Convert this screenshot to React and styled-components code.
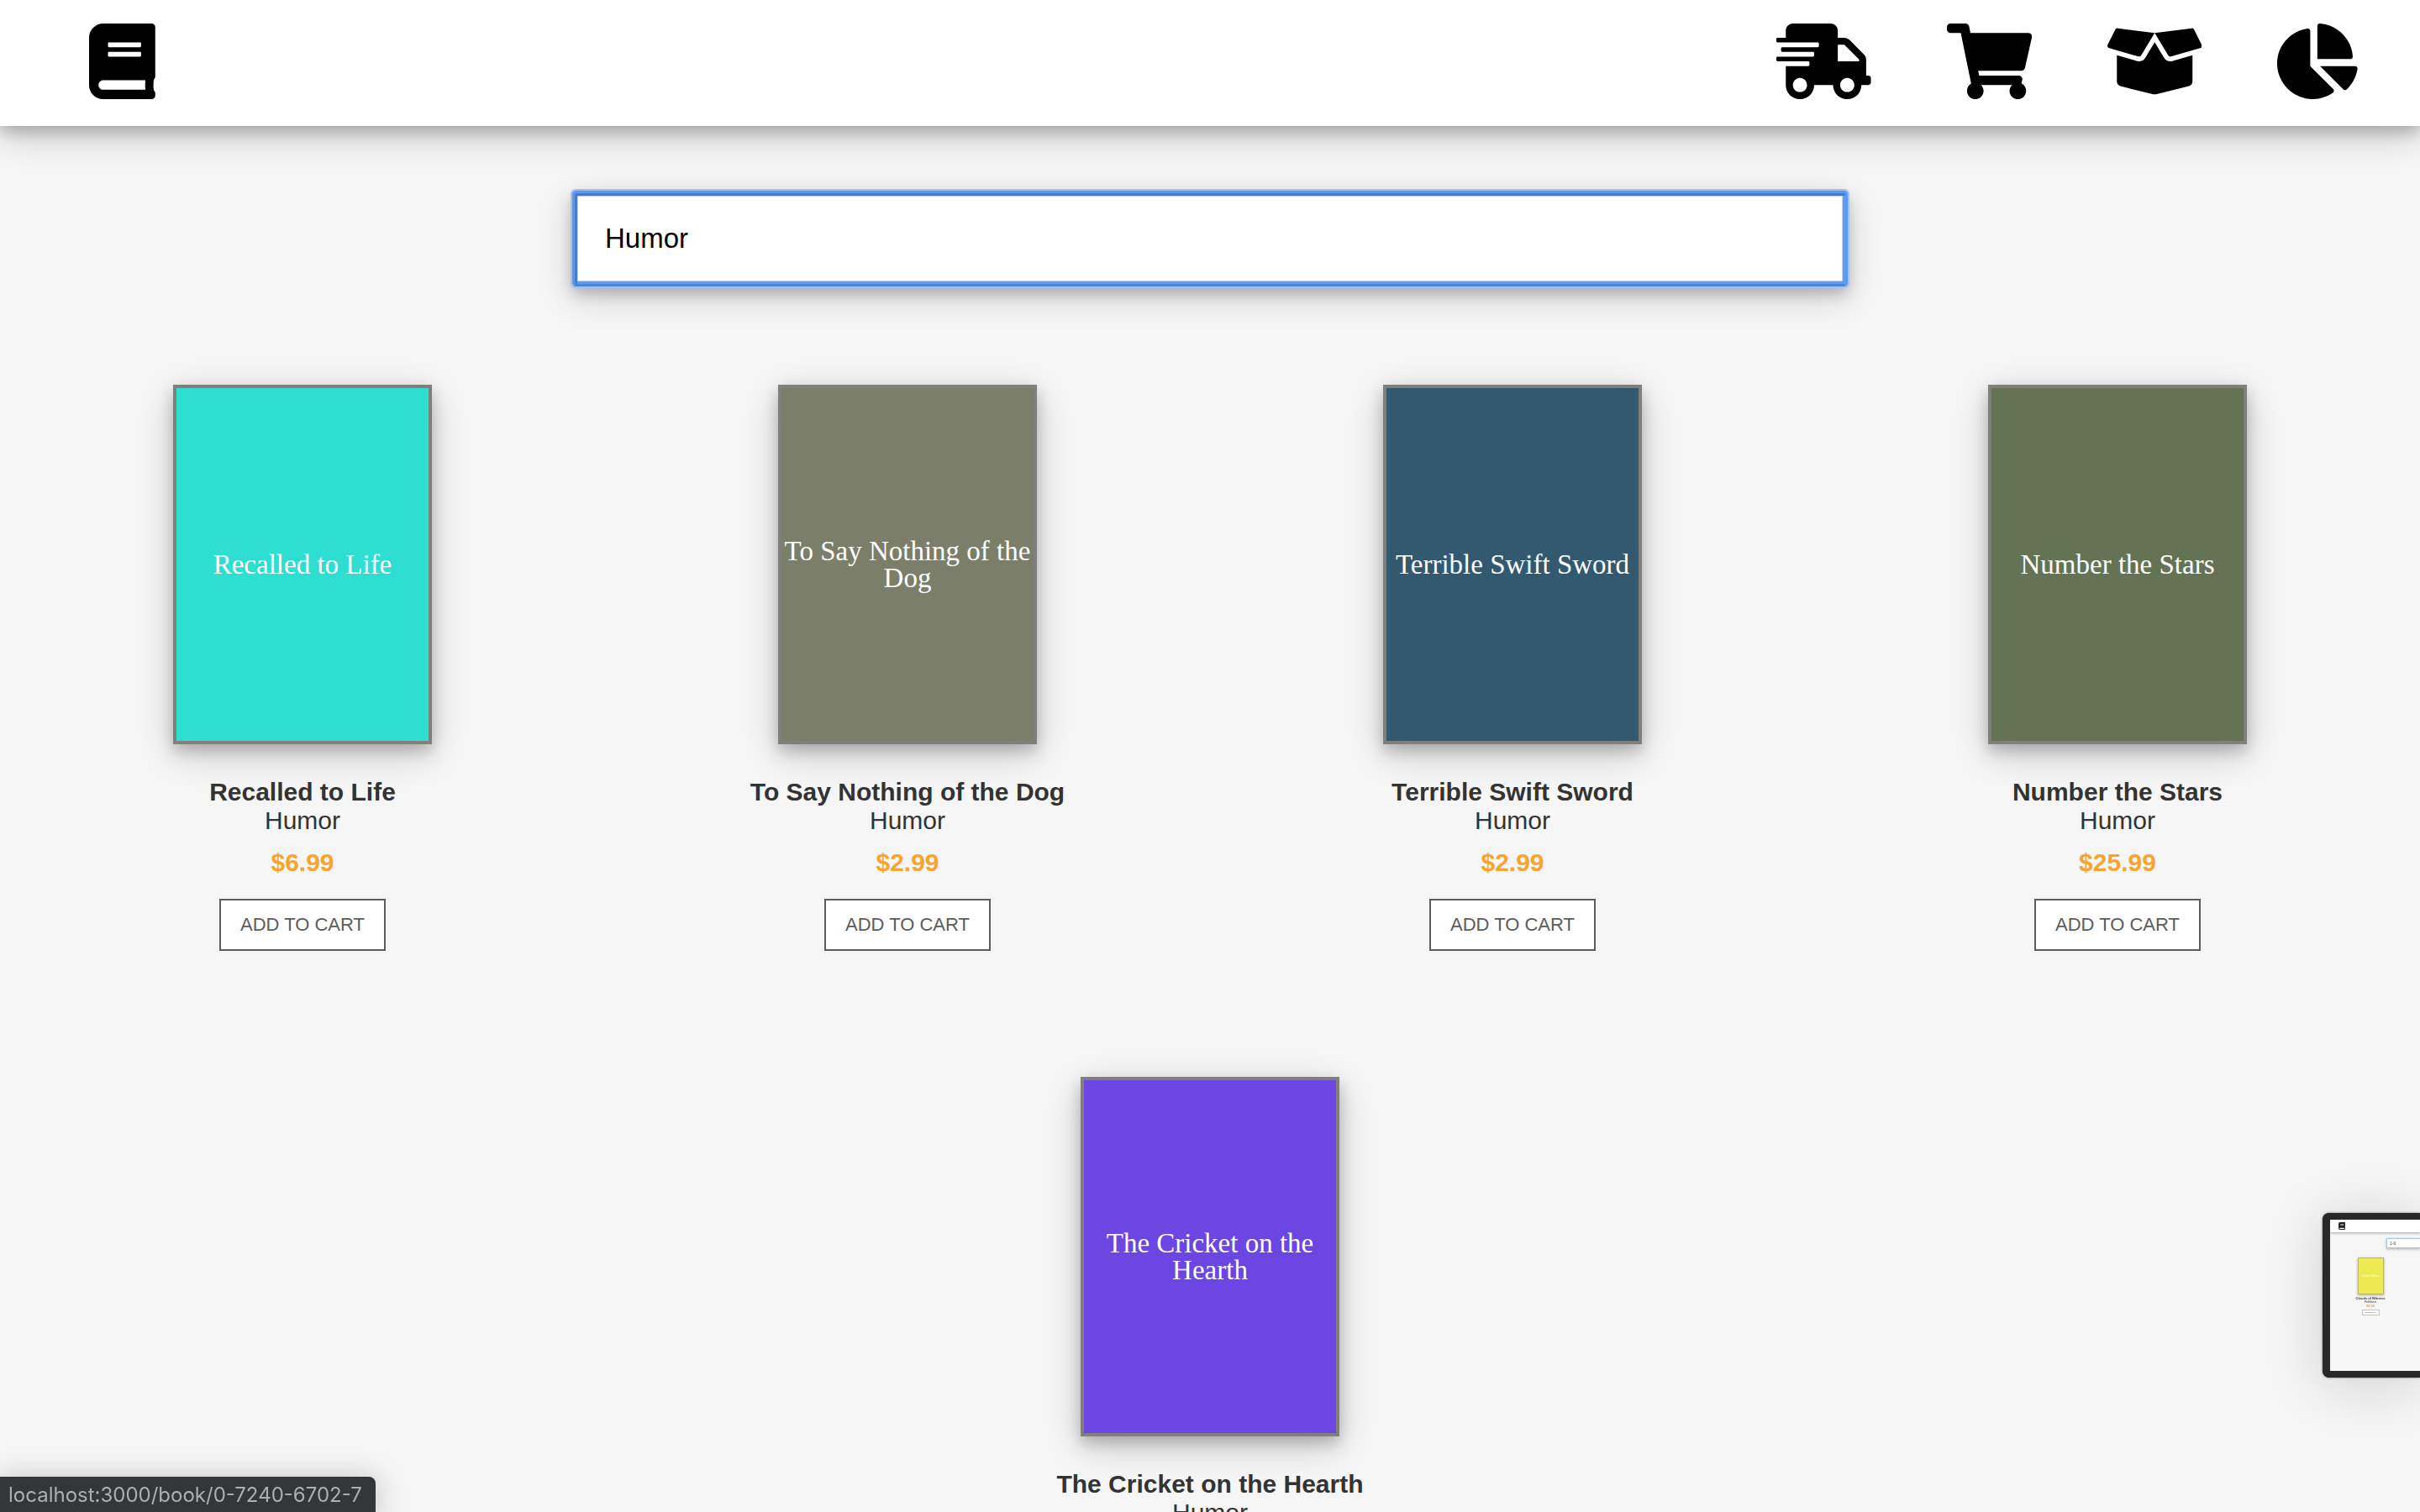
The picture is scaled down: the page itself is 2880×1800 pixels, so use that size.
import React, { useState } from "react";
import styled, { createGlobalStyle } from "styled-components";
import { FaBook, FaShippingFast, FaShoppingCart, FaBoxOpen, FaChartPie } from "react-icons/fa";

const GlobalStyle = createGlobalStyle`
  *, *::before, *::after { box-sizing: border-box; }
  html, body { height: 100%; overflow: hidden; }
  body {
    margin: 0;
    background: #f6f6f6;
    color: #333;
    font-family: Arial, "Liberation Sans", sans-serif;
    font-size: 30px;
  }
`;

const raised = "0 8px 16px rgba(0, 0, 0, 0.2), 0 12px 40px rgba(0, 0, 0, 0.19)";

const Header = styled.header`
  display: flex;
  justify-content: space-between;
  align-items: flex-start;
  height: 150px;
  padding: 28px 74px 0 106px;
  background: #fff;
  box-shadow: ${raised};
`;

const Nav = styled.nav`
  display: flex;
  gap: 90px;
`;

const IconLink = styled.a`
  display: block;
  color: #000;
  svg {
    display: block;
    width: auto;
    height: 90px;
    aspect-ratio: ${(p) => p.$ratio};
  }
`;

const SearchForm = styled.form`
  display: flex;
  justify-content: center;
  padding: 77px 0 117px;
`;

const SearchInput = styled.input`
  width: 1518px;
  max-width: 90%;
  height: 114px;
  padding: 0 36px;
  border: 3px solid #5b98ee;
  border-bottom-color: #4c84d8;
  border-radius: 4px;
  outline: 2px solid #a3c1ec;
  background: #fff;
  color: #000;
  font: 33px Arial, "Liberation Sans", sans-serif;
  box-shadow:
    inset 3px 3px 0 #477ccd,
    inset -3px -3px 0 #609cf0,
    inset 0 0 0 4px #bcd3f5,
    ${raised};
`;

const Shelf = styled.main`
  display: flex;
  flex-wrap: wrap;
  justify-content: center;
  row-gap: 150px;
`;

const Card = styled.article`
  display: flex;
  flex-direction: column;
  align-items: center;
  width: 25%;
`;

const Cover = styled.a`
  display: flex;
  align-items: center;
  justify-content: center;
  width: 308px;
  height: 428px;
  margin-bottom: 40px;
  border: 4px solid #807f7c;
  background: ${(p) => p.$color};
  color: #fff;
  font: 33px/32px Palatino, "Palatino Linotype", "Liberation Serif", serif;
  text-align: center;
  text-decoration: none;
  box-shadow: ${raised};
`;

const Title = styled.h2`
  margin: 0;
  font-size: 30px;
  line-height: 34px;
`;

const Genre = styled.p`
  margin: 0 0 16px;
  line-height: 34px;
`;

const Price = styled.p`
  margin: 0 0 26px;
  color: #f5a531;
  font-weight: bold;
  line-height: 34px;
`;

const CartButton = styled.button`
  width: 198px;
  height: 62px;
  padding: 0;
  border: 2px solid #5c5c5c;
  border-radius: 0;
  background: #fff;
  color: #5c5c5c;
  font: 22px Arial, "Liberation Sans", sans-serif;
`;

const StatusBar = styled.div`
  position: fixed;
  left: 0;
  bottom: 0;
  height: 42px;
  padding: 0 16px 0 10px;
  border-top-right-radius: 8px;
  background: #35363a;
  color: #adaeb0;
  font: 24px/44px Inter, sans-serif;
  box-shadow: 0 4px 36px rgba(0, 0, 0, 0.25);
`;

const PreviewFrame = styled.aside`
  position: fixed;
  right: 0;
  bottom: 160px;
  width: 116px;
  height: 196px;
  border: solid #282828;
  border-width: 8px 0 8px 9px;
  border-radius: 8px 0 0 8px;
  background: #f6f6f6;
  box-shadow: 0 8px 70px rgba(0, 0, 0, 0.16), 0 0 3px rgba(0, 0, 0, 0.5);
`;

const Preview = styled.div`
  height: 100%;
  overflow: hidden;
`;

const PreviewHeader = styled.div`
  height: 15px;
  padding: 3px 10px;
  background: #fff;
  color: #222;
  box-shadow: 0 1px 3px rgba(0, 0, 0, 0.35);
  svg {
    display: block;
    width: 8px;
    height: 9px;
  }
`;

const PreviewSearch = styled.div`
  height: 12px;
  margin: 7px 0 11px 67px;
  padding-left: 3px;
  border: 1px solid #a9c3ee;
  border-right: 0;
  background: #fff;
  box-shadow: 0 1px 3px rgba(0, 0, 0, 0.3);
  color: #333;
  font-size: 5px;
  line-height: 10px;
`;

const PreviewCard = styled.div`
  display: flex;
  flex-direction: column;
  align-items: center;
  width: 96px;
  font-size: 4px;
  line-height: 4px;
`;

const PreviewCover = styled.div`
  display: flex;
  align-items: center;
  justify-content: center;
  width: 31px;
  height: 44px;
  margin-bottom: 3px;
  border: 1px solid #b9b75f;
  background: #eeea52;
  color: #fff;
  font: 3px/3px "Liberation Serif", serif;
  box-shadow: 0 1px 3px rgba(0, 0, 0, 0.3);
`;

const PreviewPrice = styled.b`
  margin: 1px 0 2px;
  color: #f5a531;
`;

const PreviewButton = styled.div`
  width: 21px;
  height: 7px;
  border: 1px solid #c4c4c4;
  background: #fff;
  font-size: 2px;
  line-height: 5px;
  text-align: center;
`;

const links = [
  { label: "Orders", Icon: FaShippingFast, ratio: "640 / 512" },
  { label: "Cart", Icon: FaShoppingCart, ratio: "576 / 512" },
  { label: "Inventory", Icon: FaBoxOpen, ratio: "640 / 512" },
  { label: "Reports", Icon: FaChartPie, ratio: "544 / 512" },
];

const books = [
  { title: "Recalled to Life", price: "$6.99", color: "#2dded1" },
  { title: "To Say Nothing of the Dog", price: "$2.99", color: "#7b7e68" },
  { title: "Terrible Swift Sword", price: "$2.99", color: "#335971" },
  { title: "Number the Stars", price: "$25.99", color: "#657355" },
  { title: "The Cricket on the Hearth", price: "$8.99", color: "#6b46e2" },
];

export default function App() {
  const [query, setQuery] = useState("Humor");
  return (
    <>
      <GlobalStyle />
      <Header>
        <IconLink href="#home" aria-label="Books" $ratio="448 / 512"><FaBook /></IconLink>
        <Nav>
          {links.map(({ label, Icon, ratio }) => (
            <IconLink key={label} href={"#" + label.toLowerCase()} aria-label={label} $ratio={ratio}>
              <Icon />
            </IconLink>
          ))}
        </Nav>
      </Header>
      <SearchForm>
        <SearchInput aria-label="Search books" value={query} onChange={(e) => setQuery(e.target.value)} />
      </SearchForm>
      <Shelf>
        {books.map((b) => (
          <Card key={b.title}>
            <Cover href="#book" $color={b.color}>{b.title}</Cover>
            <Title>{b.title}</Title>
            <Genre>Humor</Genre>
            <Price>{b.price}</Price>
            <CartButton type="button">ADD TO CART</CartButton>
          </Card>
        ))}
      </Shelf>
      <StatusBar>localhost:3000/book/0-7240-6702-7</StatusBar>
      <PreviewFrame>
        <Preview>
          <PreviewHeader><FaBook /></PreviewHeader>
          <PreviewSearch>1-0</PreviewSearch>
          <PreviewCard>
            <PreviewCover>Clouds of Witness</PreviewCover>
            <b>Clouds of Witness</b>
            <span>Folklore</span>
            <PreviewPrice>$4.99</PreviewPrice>
            <PreviewButton>ADD TO CART</PreviewButton>
          </PreviewCard>
        </Preview>
      </PreviewFrame>
    </>
  );
}
